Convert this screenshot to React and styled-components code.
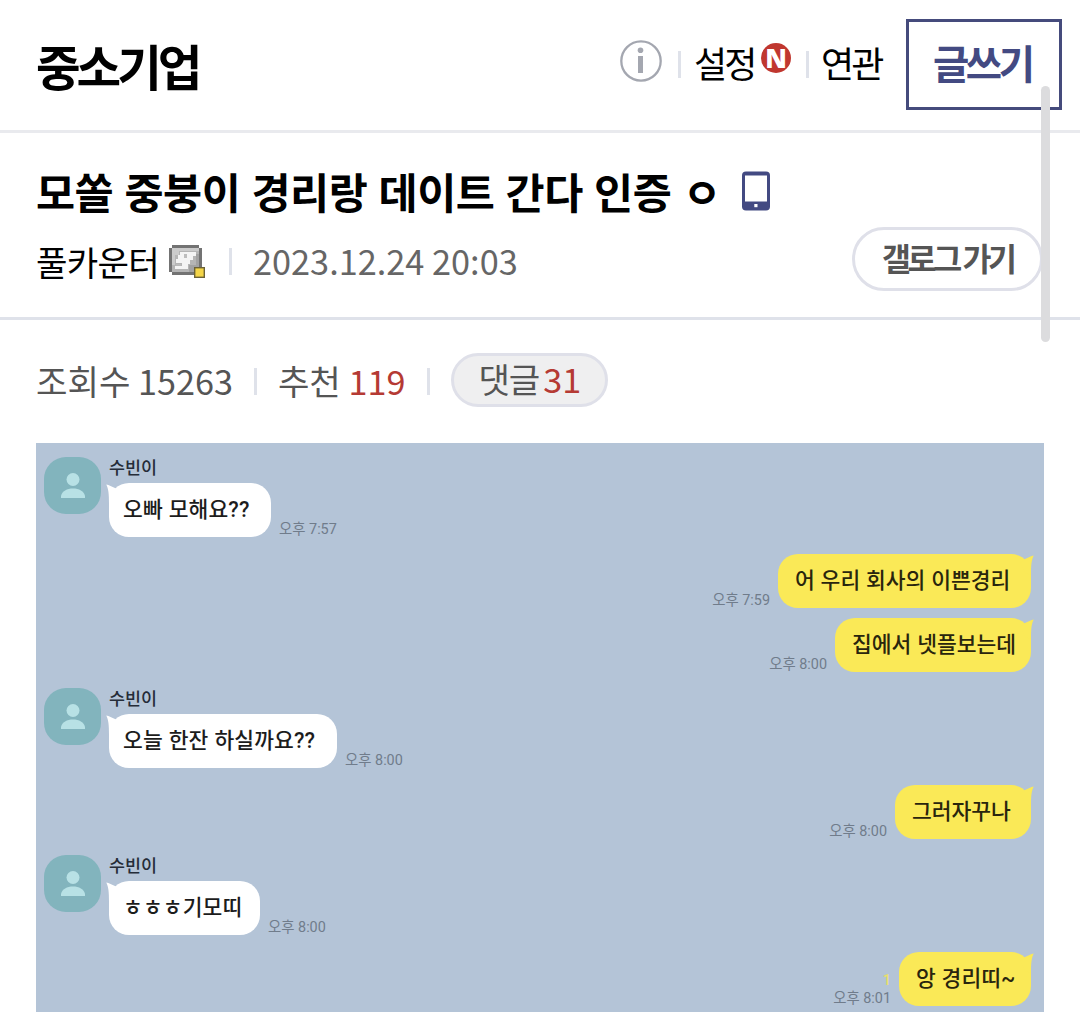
import React from "react";
import styled, { createGlobalStyle } from "styled-components";

const GlobalStyle = createGlobalStyle`
  * { box-sizing: border-box; }
  body {
    margin: 0;
    background: #fff;
    color: #000;
    font-family: "Noto Sans CJK KR", "Noto Sans", sans-serif;
    overflow: hidden;
  }
`;

const Page = styled.main`
  position: relative;
  width: 1080px;
  height: 1023px;
  background: #fff;
`;

const Text = styled.span`
  flex: none;
  white-space: pre;
  font-size: ${(p) => p.$size}px;
  line-height: 1;
  font-weight: ${(p) => p.$weight || 400};
  letter-spacing: ${(p) => p.$ls || 0}px;
  word-spacing: ${(p) => p.$ws || 0}px;
  color: ${(p) => p.$color || "#000"};
  margin: ${(p) => p.$m || "0"};
`;

const ChatText = styled(Text)`
  font-family: Roboto, "Noto Sans CJK KR", sans-serif;
`;

const Header = styled.header`
  display: flex;
  align-items: flex-start;
  justify-content: space-between;
  height: 133px;
  padding: 19px 18px 0 36px;
  border-bottom: 3px solid #e9eaee;
`;

const HeaderMenu = styled.nav`
  display: flex;
  align-items: flex-start;
`;

const MenuLabel = styled(Text)`
  width: ${(p) => p.$w}px;
`;

const Divider = styled.i`
  flex: none;
  width: 3px;
  height: 27px;
  background: #dfe2ea;
  margin: ${(p) => p.$m};
`;

const Icon = styled.svg`
  flex: none;
  display: block;
  margin: ${(p) => p.$m || "0"};
`;

const NewBadge = styled.b`
  flex: none;
  display: flex;
  align-items: center;
  justify-content: center;
  width: 30px;
  height: 30px;
  margin: 24px 0 0;
  border-radius: 50%;
  background: #c0372f;
  color: #fff;
  font: 800 26px/30px "Open Sans", sans-serif;
`;

const WriteButton = styled.button`
  display: flex;
  align-items: flex-start;
  width: 156px;
  height: 91px;
  padding: 20px 0 0 24px;
  margin-left: 19px;
  border: 3px solid #454b7c;
  background: #fff;
  font-family: inherit;
`;

const PostHead = styled.section`
  height: 187px;
  padding: 37px 37px 0 36px;
  border-bottom: 3px solid #dfe2ea;
`;

const TitleRow = styled.div`
  display: flex;
  align-items: flex-start;
  height: 57px;
`;

const MetaRow = styled.div`
  display: flex;
  align-items: flex-start;
`;

const LogButton = styled.button`
  display: flex;
  align-items: flex-start;
  width: 191px;
  height: 64px;
  margin-left: auto;
  padding: 12px 0 0 27px;
  border: 3px solid #dfe0e9;
  border-radius: 32px;
  background: #fff;
  font-family: inherit;
`;

const Stats = styled.section`
  display: flex;
  align-items: flex-start;
  height: 123px;
  padding: 33px 36px 0;
`;

const CommentPill = styled.button`
  display: flex;
  align-items: flex-start;
  width: 157px;
  height: 54px;
  margin-left: 21px;
  padding: 5px 0 0 24px;
  border: 3px solid #dfe0e9;
  border-radius: 27px;
  background: #efeff0;
  font-family: inherit;
`;

const Chat = styled.section`
  height: 569px;
  margin: 0 36px;
  padding: 14px 13px 0 8px;
  background: #b4c4d7;
  overflow: hidden;
`;

const TheirMessage = styled.article`
  display: flex;
  align-items: flex-start;
  height: 80px;
  margin-bottom: ${(p) => p.$gap}px;
`;

const Avatar = styled.div`
  flex: none;
  display: flex;
  justify-content: center;
  width: 57px;
  height: 57px;
  padding-top: 15px;
  border-radius: 22px;
  background: #82b4bd;
`;

const MessageBody = styled.div`
  margin-left: 8px;
`;

const Sender = styled.div`
  height: 26px;
  padding-top: 1px;
  font-size: 17.4px;
  line-height: 17px;
  font-weight: 500;
  color: #252c38;
`;

const Line = styled.div`
  display: flex;
  align-items: flex-end;
  justify-content: ${(p) => (p.$mine ? "flex-end" : "flex-start")};
  gap: 8px;
  height: 54px;
  margin-bottom: ${(p) => p.$gap || 0}px;
`;

const Bubble = styled.div`
  position: relative;
  flex: none;
  display: flex;
  align-items: flex-start;
  width: ${(p) => p.$w}px;
  height: 54px;
  padding: 16px 0 0 ${(p) => (p.$mine ? 17 : 14)}px;
  border-radius: 20px;
  background: ${(p) => (p.$mine ? "#fae957" : "#fff")};
`;

const Tail = styled.svg`
  position: absolute;
  top: 1px;
  ${(p) => (p.$mine ? "right: -3px; transform: scaleX(-1);" : "left: -3px;")}
  width: 18px;
  height: 22px;
`;

const TimeBlock = styled.div`
  display: flex;
  flex-direction: column;
  align-items: flex-end;
  gap: 3px;
`;

const ScrollThumb = styled.div`
  position: absolute;
  top: 86px;
  left: 1041px;
  width: 9px;
  height: 256px;
  border-radius: 5px;
  background: #dcdcde;
`;

function InfoIcon() {
  return (
    <Icon $m="21px 0 0 0" width="42" height="42" viewBox="0 0 42 42">
      <circle cx="21" cy="21" r="19.7" fill="none" stroke="#a4a7b0" strokeWidth="2.3" />
      <circle cx="20.5" cy="10.3" r="2.8" fill="#a4a7b0" />
      <rect x="18" y="16" width="5" height="17" fill="#a4a7b0" />
    </Icon>
  );
}

function PhoneIcon() {
  return (
    <Icon $m="1px 0 0 21px" width="28" height="40" viewBox="0 0 28 40">
      <rect x="0" y="0.5" width="28" height="39" rx="4" fill="#434a82" />
      <rect x="3" y="4.5" width="22" height="26" fill="#fff" />
      <rect x="12.3" y="33" width="3.2" height="3.2" fill="#fff" />
    </Icon>
  );
}

function BadgeIcon() {
  return (
    <Icon $m="18px 0 0 10px" width="37" height="34" viewBox="0 0 37 34">
      <path d="M3 0H30V3H33V27H30V30H3V27H0V3H3Z" fill="#737373" />
      <rect x="3" y="3" width="27" height="24" fill="#b5b5b5" />
      <path d="M3 3H30V6H10V10H6V20H3Z" fill="#cbcbcb" />
      <path d="M27 9H30V22H27ZM20 20H27V27H20Z" fill="#a2a2a2" />
      <path d="M11 7H27V11H24V15H21V19H19V24H6V21H13V18H7V14H9V10H11Z" fill="#f4f4f4" />
      <path d="M15 9H18V13H15ZM7 19H12V20.5H7Z" fill="#bdbdbd" />
      <rect x="25.7" y="22.7" width="9.6" height="9.6" fill="#f4d548" stroke="#6c6236" strokeWidth="1.4" />
    </Icon>
  );
}

function Time({ children, unread }) {
  return (
    <TimeBlock>
      {unread && <ChatText $size={14.4} $weight={500} $color="#e9df6c">{unread}</ChatText>}
      <ChatText $size={14.4} $color="#707c8b">{children}</ChatText>
    </TimeBlock>
  );
}

function TailShape({ mine }) {
  return (
    <Tail $mine={mine} viewBox="0 0 18 22">
      <path d="M0.3 0.6C3 1 6 3 9 4L14 8L9 18L3 20C3 10 2.5 5 0.3 0.6Z" fill={mine ? "#fae957" : "#fff"} />
    </Tail>
  );
}

function Theirs({ text, time, width, gap }) {
  return (
    <TheirMessage $gap={gap}>
      <Avatar>
        <svg width="26" height="28" viewBox="0 0 26 28">
          <circle cx="13" cy="7.5" r="6.5" fill="#b8e1e5" />
          <path d="M1 26V24C2 19 7 16.5 13 16.5S24 19 25 24V26Z" fill="#b8e1e5" />
        </svg>
      </Avatar>
      <MessageBody>
        <Sender>수빈이</Sender>
        <Line>
          <Bubble $w={width}>
            <TailShape />
            <ChatText $size={21.5} $weight={500} $color="#1c1c1c" $ls={0.1} $ws={0.5}>{text}</ChatText>
          </Bubble>
          <Time>{time}</Time>
        </Line>
      </MessageBody>
    </TheirMessage>
  );
}

function Mine({ text, time, width, gap, unread }) {
  return (
    <Line $mine $gap={gap}>
      <Time unread={unread}>{time}</Time>
      <Bubble $mine $w={width}>
        <TailShape mine />
        <ChatText $size={21.5} $weight={500} $color="#29250d" $ws={0.5}>{text}</ChatText>
      </Bubble>
    </Line>
  );
}

export default function App() {
  return (
    <Page>
      <GlobalStyle />
      <Header>
        <Text as="h1" $size={48.5} $weight={700} $ls={-4} $m="22px 0 0">중소기업</Text>
        <HeaderMenu>
          <InfoIcon />
          <Divider $m="32px 0 0 16px" />
          <MenuLabel $w={67} $size={36} $ls={-2.8} $m="25px 0 0 13px">설정</MenuLabel>
          <NewBadge>N</NewBadge>
          <Divider $m="32px 0 0 15px" />
          <MenuLabel $w={66} $size={36} $ls={-2.8} $m="25px 0 0 12px">연관</MenuLabel>
          <WriteButton>
            <Text $size={39.5} $weight={700} $ls={-3.5} $color="#434a82">글쓰기</Text>
          </WriteButton>
        </HeaderMenu>
      </Header>

      <PostHead>
        <TitleRow>
          <Text as="h2" $size={42.5} $weight={700} $ls={-0.5} $ws={2.1}>모쏠 중붕이 경리랑 데이트 간다 인증 ㅇ</Text>
          <PhoneIcon />
        </TitleRow>
        <MetaRow>
          <Text $size={34.2} $ls={-0.7} $m="17px 0 0">풀카운터</Text>
          <BadgeIcon />
          <Divider $m="21px 0 0 23px" />
          <Text $size={34.3} $color="#666" $m="16px 0 0 21px">2023.12.24 20:03</Text>
          <LogButton>
            <Text $size={31.5} $weight={700} $ls={-3.4} $color="#555">갤로그 가기</Text>
          </LogButton>
        </MetaRow>
      </PostHead>

      <Stats>
        <Text $size={34.2} $color="#555" $m="10px 0 0">조회수 15263</Text>
        <Divider $m="15px 0 0 21px" />
        <Text $size={34.2} $color="#555" $m="10px 0 0 21px">추천 </Text>
        <Text $size={34.2} $color="#b53a34" $m="10px 0 0">119</Text>
        <Divider $m="15px 0 0 22px" />
        <CommentPill>
          <Text $size={34.2} $color="#555" $ls={-1}>댓글</Text>
          <Text $size={34.2} $color="#b53a34" $m="0 0 0 4px">31</Text>
        </CommentPill>
      </Stats>

      <Chat>
        <Theirs text="오빠 모해요??" time="오후 7:57" width={162} gap={17} />
        <Mine text="어 우리 회사의 이쁜경리" time="오후 7:59" width={253} gap={10} />
        <Mine text="집에서 넷플보는데" time="오후 8:00" width={196} gap={16} />
        <Theirs text="오늘 한잔 하실까요??" time="오후 8:00" width={228} gap={17} />
        <Mine text="그러자꾸나" time="오후 8:00" width={136} gap={16} />
        <Theirs text="ㅎㅎㅎ기모띠" time="오후 8:00" width={151} gap={17} />
        <Mine text="앙 경리띠~" time="오후 8:01" width={132} unread="1" />
      </Chat>

      <ScrollThumb />
    </Page>
  );
}
